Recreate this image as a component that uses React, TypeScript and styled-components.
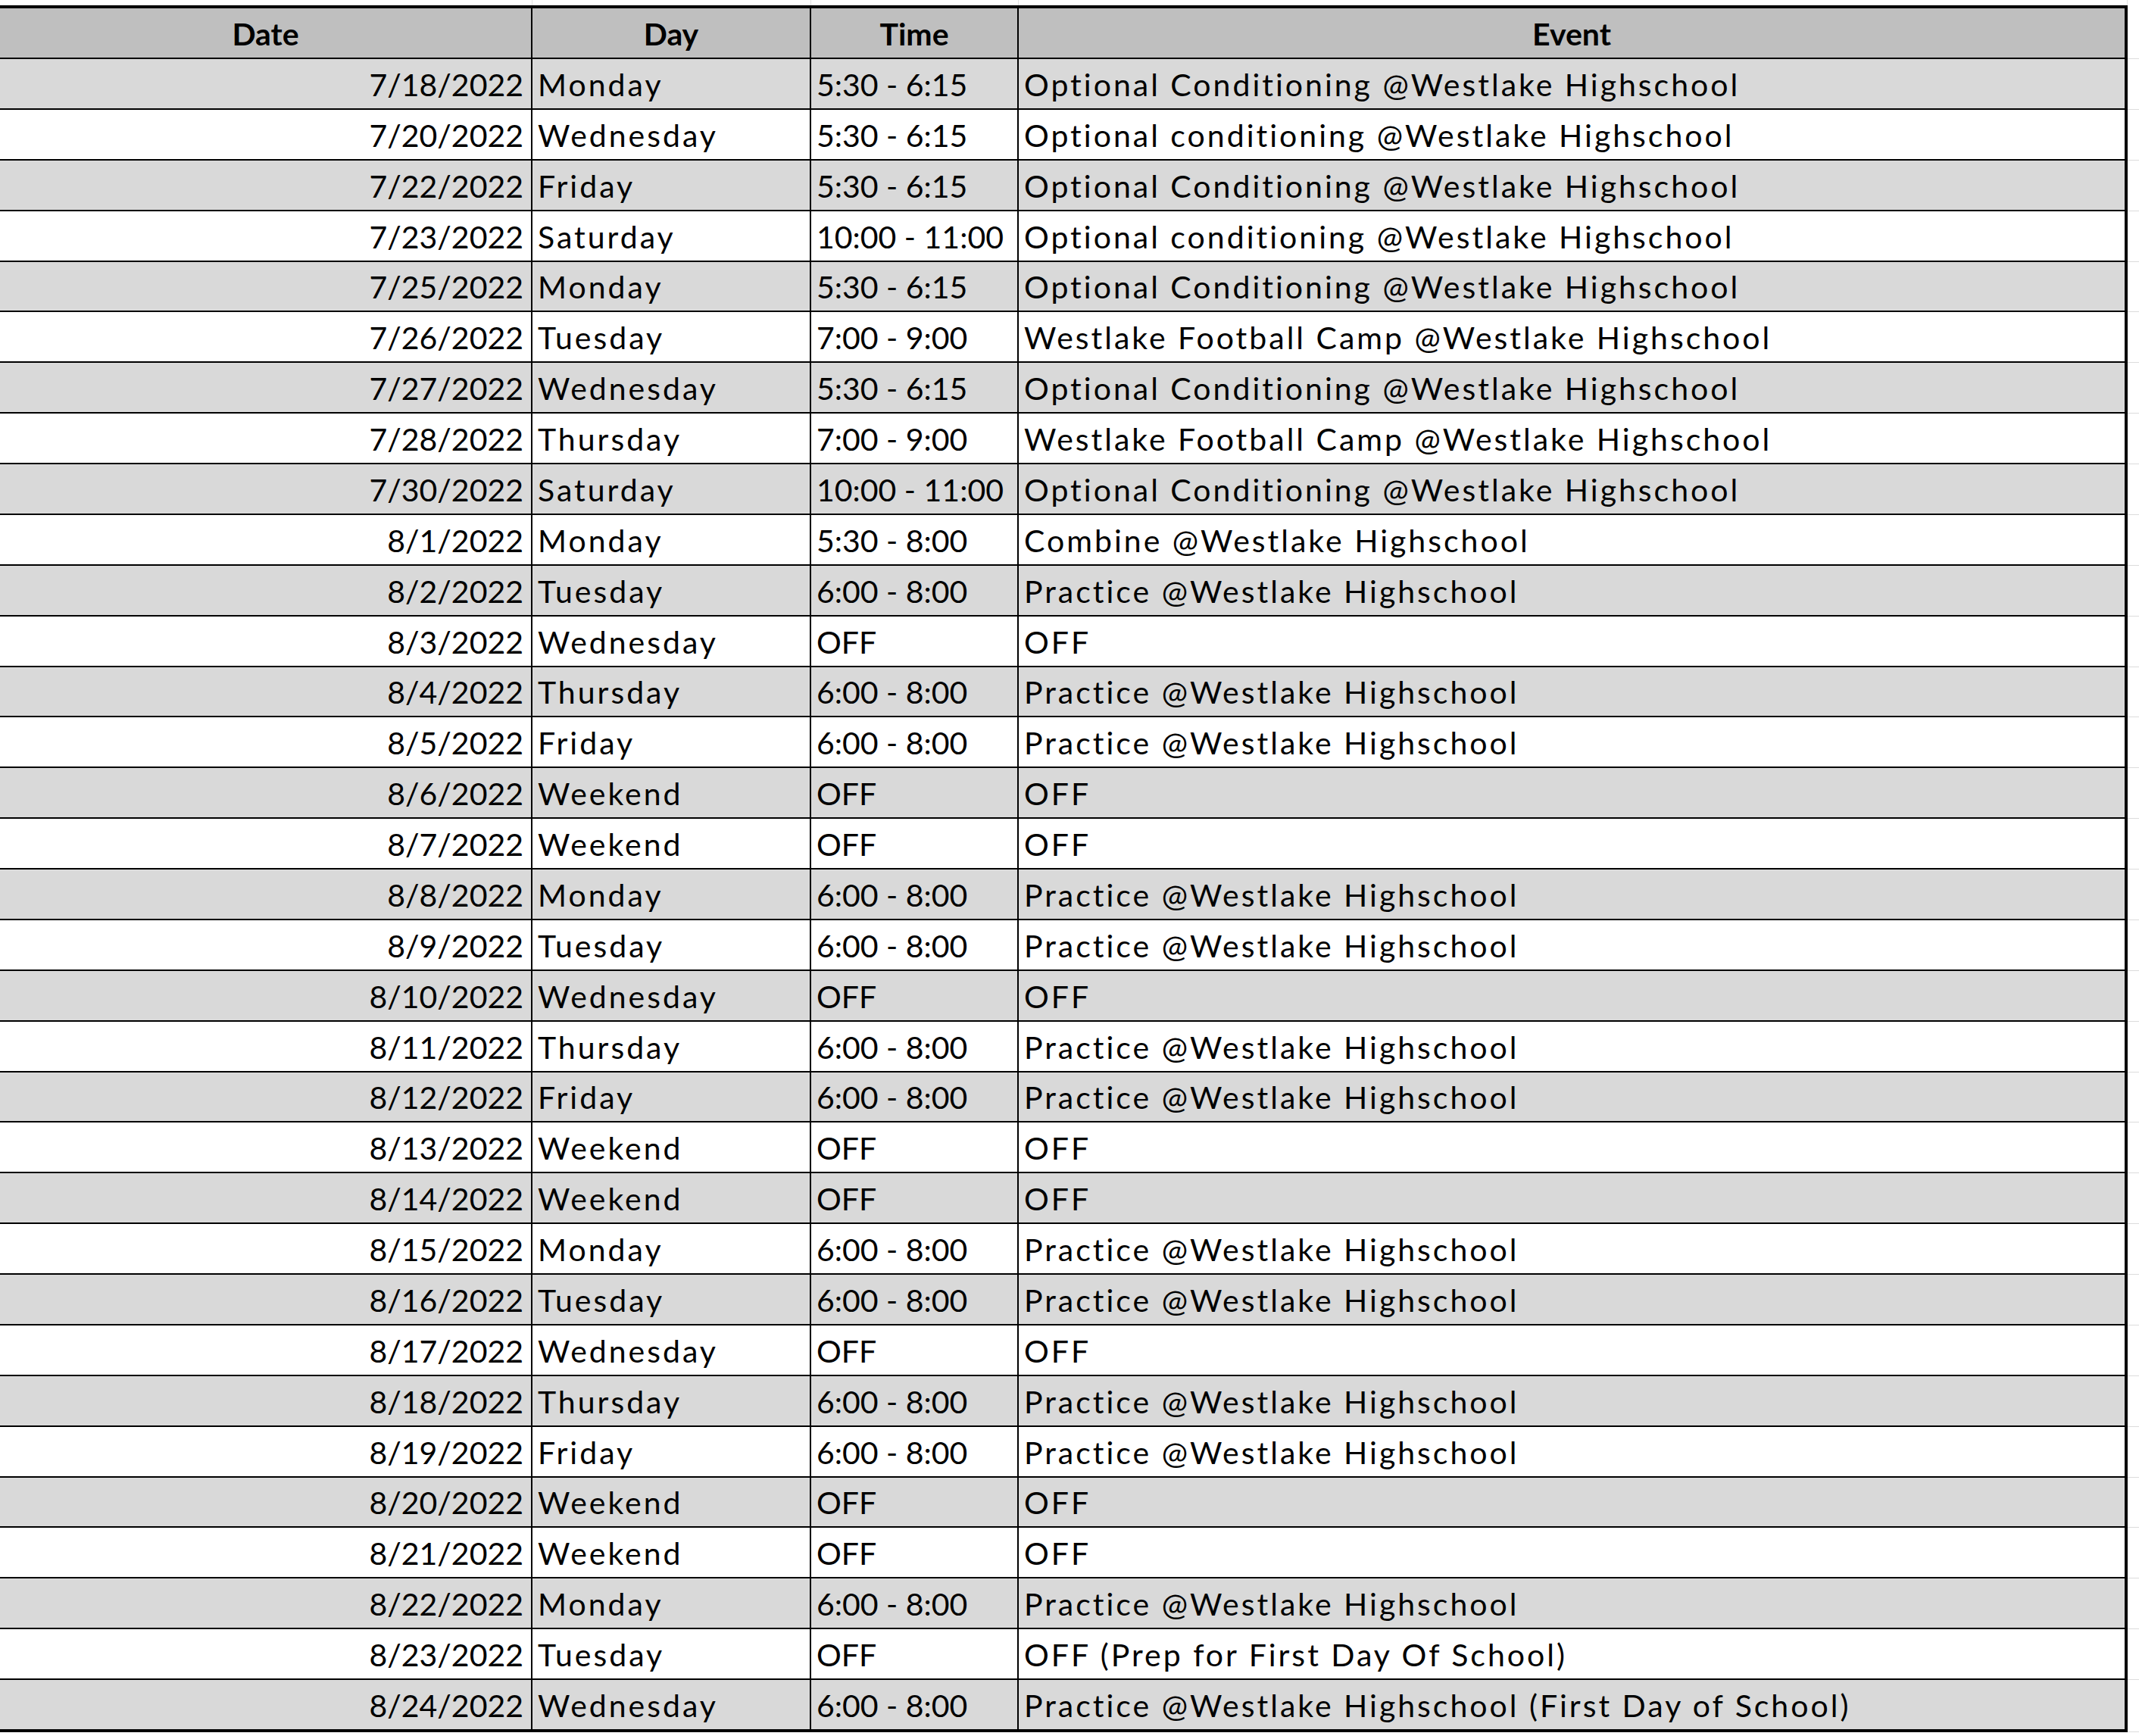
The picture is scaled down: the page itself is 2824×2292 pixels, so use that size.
import { createGlobalStyle } from 'styled-components';
import styled from 'styled-components';

const GlobalStyle = createGlobalStyle`
  html, body {
    margin: 0;
    padding: 0;
    background: #fff;
  }
  body {
    font-family: Lato, 'Open Sans', sans-serif;
    color: #000;
  }
`;

type Shade = 'head' | 'gray' | 'white';
type Align = 'left' | 'right' | 'center';

const shadeColor: Record<Shade, string> = {
  head: '#bfbfbf',
  gray: '#d9d9d9',
  white: '#ffffff'
};

const Sheet = styled.div`
  width: 2824px;
  background: #fff;
`;

const TopStrip = styled.div`
  display: grid;
  grid-template-columns: 703px 368px 274px 1464px 1fr;
  height: 7px;
`;

const StripCell = styled.div`
  border-right: 1px solid #e2e2e2;
`;

const Row = styled.div<{ $last?: boolean; $head?: boolean }>`
  display: grid;
  grid-template-columns: 703px 368px 274px 1464px 1fr;
  height: ${(p) => (p.$head ? '71px' : p.$last ? '69px' : '66.875px')};
`;

const Cell = styled.div<{
  $shade: Shade;
  $align: Align;
  $edge?: boolean;
  $head?: boolean;
  $last?: boolean;
  $words?: boolean;
}>`
  box-sizing: border-box;
  display: flex;
  align-items: flex-end;
  justify-content: ${(p) =>
    p.$align === 'right' ? 'flex-end' : p.$align === 'center' ? 'center' : 'flex-start'};
  padding: 0 ${(p) => (p.$align === 'right' ? '10px' : '0')} 11px
    ${(p) => (p.$align === 'left' ? '7px' : '0')};
  background: ${(p) => shadeColor[p.$shade]};
  border-right: ${(p) => (p.$edge ? '4px' : '2px')} solid #000;
  border-bottom: ${(p) => (p.$last ? '4px' : '2px')} solid #000;
  border-top: ${(p) => (p.$head ? '4px solid #000' : 'none')};
  font-size: 41px;
  line-height: 1;
  letter-spacing: ${(p) => (p.$words ? '3px' : '0')};
  font-weight: ${(p) => (p.$head ? 700 : 400)};
  white-space: nowrap;
`;

const Filler = styled.div`
  box-sizing: border-box;
  background: #fff;
  border-bottom: 1px solid #dcdcdc;
`;

interface Entry {
  date: string;
  day: string;
  time: string;
  event: string;
}

const PRACTICE = 'Practice @Westlake Highschool';
const OPT_C = 'Optional Conditioning @Westlake Highschool';
const OPT_L = 'Optional conditioning @Westlake Highschool';
const CAMP = 'Westlake Football Camp @Westlake Highschool';

const schedule: Entry[] = [
  { date: '7/18/2022', day: 'Monday', time: '5:30 - 6:15', event: OPT_C },
  { date: '7/20/2022', day: 'Wednesday', time: '5:30 - 6:15', event: OPT_L },
  { date: '7/22/2022', day: 'Friday', time: '5:30 - 6:15', event: OPT_C },
  { date: '7/23/2022', day: 'Saturday', time: '10:00 - 11:00', event: OPT_L },
  { date: '7/25/2022', day: 'Monday', time: '5:30 - 6:15', event: OPT_C },
  { date: '7/26/2022', day: 'Tuesday', time: '7:00 - 9:00', event: CAMP },
  { date: '7/27/2022', day: 'Wednesday', time: '5:30 - 6:15', event: OPT_C },
  { date: '7/28/2022', day: 'Thursday', time: '7:00 - 9:00', event: CAMP },
  { date: '7/30/2022', day: 'Saturday', time: '10:00 - 11:00', event: OPT_C },
  { date: '8/1/2022', day: 'Monday', time: '5:30 - 8:00', event: 'Combine @Westlake Highschool' },
  { date: '8/2/2022', day: 'Tuesday', time: '6:00 - 8:00', event: PRACTICE },
  { date: '8/3/2022', day: 'Wednesday', time: 'OFF', event: 'OFF' },
  { date: '8/4/2022', day: 'Thursday', time: '6:00 - 8:00', event: PRACTICE },
  { date: '8/5/2022', day: 'Friday', time: '6:00 - 8:00', event: PRACTICE },
  { date: '8/6/2022', day: 'Weekend', time: 'OFF', event: 'OFF' },
  { date: '8/7/2022', day: 'Weekend', time: 'OFF', event: 'OFF' },
  { date: '8/8/2022', day: 'Monday', time: '6:00 - 8:00', event: PRACTICE },
  { date: '8/9/2022', day: 'Tuesday', time: '6:00 - 8:00', event: PRACTICE },
  { date: '8/10/2022', day: 'Wednesday', time: 'OFF', event: 'OFF' },
  { date: '8/11/2022', day: 'Thursday', time: '6:00 - 8:00', event: PRACTICE },
  { date: '8/12/2022', day: 'Friday', time: '6:00 - 8:00', event: PRACTICE },
  { date: '8/13/2022', day: 'Weekend', time: 'OFF', event: 'OFF' },
  { date: '8/14/2022', day: 'Weekend', time: 'OFF', event: 'OFF' },
  { date: '8/15/2022', day: 'Monday', time: '6:00 - 8:00', event: PRACTICE },
  { date: '8/16/2022', day: 'Tuesday', time: '6:00 - 8:00', event: PRACTICE },
  { date: '8/17/2022', day: 'Wednesday', time: 'OFF', event: 'OFF' },
  { date: '8/18/2022', day: 'Thursday', time: '6:00 - 8:00', event: PRACTICE },
  { date: '8/19/2022', day: 'Friday', time: '6:00 - 8:00', event: PRACTICE },
  { date: '8/20/2022', day: 'Weekend', time: 'OFF', event: 'OFF' },
  { date: '8/21/2022', day: 'Weekend', time: 'OFF', event: 'OFF' },
  { date: '8/22/2022', day: 'Monday', time: '6:00 - 8:00', event: PRACTICE },
  { date: '8/23/2022', day: 'Tuesday', time: 'OFF', event: 'OFF (Prep for First Day Of School)' },
  {
    date: '8/24/2022',
    day: 'Wednesday',
    time: '6:00 - 8:00',
    event: 'Practice @Westlake Highschool (First Day of School)'
  }
];

export default function App() {
  return (
    <>
      <GlobalStyle />
      <Sheet>
        <TopStrip>
          <StripCell />
          <StripCell />
          <StripCell />
          <StripCell />
          <div />
        </TopStrip>
        <Row $head>
          <Cell $shade='head' $align='center' $head>Date</Cell>
          <Cell $shade='head' $align='center' $head>Day</Cell>
          <Cell $shade='head' $align='center' $head>Time</Cell>
          <Cell $shade='head' $align='center' $head $edge>Event</Cell>
          <Filler />
        </Row>
        {schedule.map((item, i) => {
          const shade: Shade = i % 2 === 0 ? 'gray' : 'white';
          const last = i === schedule.length - 1;
          return (
            <Row key={item.date} $last={last}>
              <Cell $shade={shade} $align='right' $last={last}>{item.date}</Cell>
              <Cell $shade={shade} $align='left' $last={last} $words>{item.day}</Cell>
              <Cell $shade={shade} $align='left' $last={last}>{item.time}</Cell>
              <Cell $shade={shade} $align='left' $last={last} $edge $words>{item.event}</Cell>
              <Filler />
            </Row>
          );
        })}
      </Sheet>
    </>
  );
}
